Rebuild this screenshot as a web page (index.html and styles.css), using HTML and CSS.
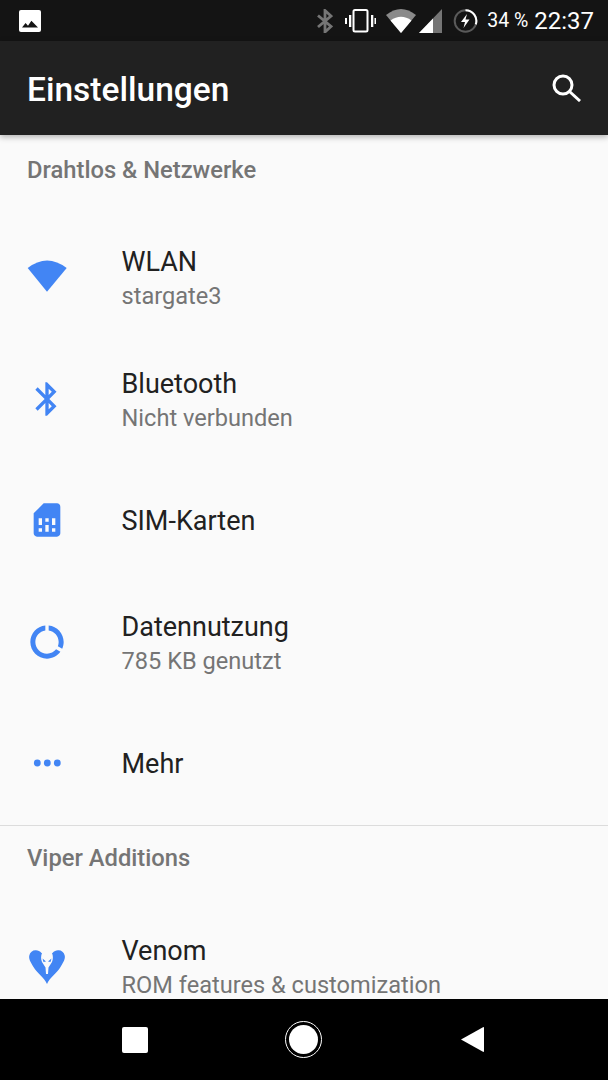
FILE: index.html
```html
<!DOCTYPE html>
<html lang="de">
<head>
<meta charset="UTF-8">
<meta name="viewport" content="width=device-width, initial-scale=1.0">
<title>Einstellungen</title>
<link rel="stylesheet" href="styles.css">
</head>
<body>
<div class="phone">
  <div class="status-bar">
    <svg class="st-image" viewBox="0 0 22 22"><rect width="22" height="22" rx="2" fill="#fff"/><path d="M3 17.500l3.600-4.400 2.400 2.600 3.400-5 6.600 6.800z" fill="#141414"/></svg>
    <div class="status-right">
      <svg class="st-bt" viewBox="0 0 16 24"><path d="M1 6.500l13 11-6 5.500V1.500l6 5.500-13 11" fill="none" stroke="#757575" stroke-width="2.800"/></svg>
      <svg class="st-vib" viewBox="0 0 31 24"><rect x="8.500" y="1" width="14" height="21.500" rx="1.500" fill="none" stroke="#fff" stroke-width="2"/><path d="M4 6h2.300v12H4zM26 6h2.300v12H26zM0 9h2v6H0zM29.500 9h2v6h-2z" fill="#fff"/></svg>
      <svg class="st-wifi" viewBox="0 0 30 24"><path d="M0 6Q15 -6 30 6L15 24z" fill="#8a8a8a"/><path d="M4.500 11.500Q15 4 25.500 11.500L15 24z" fill="#fff"/></svg>
      <svg class="st-signal" viewBox="0 0 23 24"><path d="M0 24L23 0V24z" fill="#757575"/><path d="M0 24L14 9.400V24z" fill="#fff"/></svg>
      <svg class="st-batt" viewBox="0 0 25 24"><circle cx="12.500" cy="12" r="10.800" fill="none" stroke="#5a5a5a" stroke-width="2"/><path d="M12.500 1.200A10.800 10.800 0 0 1 22.800 15.400" fill="none" stroke="#fff" stroke-width="2"/><path d="M14 5l-6 8h4l-1.500 6 6-8.500h-4z" fill="#fff"/></svg>
      <span class="st-pct">34 %</span>
      <span class="st-time">22:37</span>
    </div>
  </div>

  <div class="app-bar">
    <span class="app-title">Einstellungen</span>
    <svg class="search" viewBox="0 0 29 28"><circle cx="11" cy="11" r="9" fill="none" stroke="#fff" stroke-width="3"/><path d="M17.500 17.500L28 27" fill="none" stroke="#fff" stroke-width="3"/></svg>
  </div>

  <div class="list">
    <div class="section-head first">Drahtlos &amp; Netzwerke</div>

    <div class="row">
      <svg class="row-icon" viewBox="0 0 40 40"><path d="M.7 11Q20 -4 39.700 11L20 34.800z" fill="#4285f4"/></svg>
      <div class="row-text"><div class="row-title">WLAN</div><div class="row-sub">stargate3</div></div>
    </div>
    <div class="row">
      <svg class="row-icon" viewBox="0 0 24 24"><path d="M17.710 7.710L12 2h-1v7.590L6.410 5 5 6.410 10.590 12 5 17.590 6.410 19 11 14.410V22h1l5.710-5.710-4.300-4.290 4.300-4.290zM13 5.830l1.880 1.880L13 9.590V5.830zm1.880 10.460L13 18.170v-3.760l1.880 1.880z" fill="#4285f4"/></svg>
      <div class="row-text"><div class="row-title">Bluetooth</div><div class="row-sub">Nicht verbunden</div></div>
    </div>
    <div class="row">
      <svg class="row-icon" viewBox="0 0 24 24"><path d="M19.990 4c0-1.100-.890-2-1.990-2h-8L4 8v12c0 1.100.900 2 2 2h12c1.100 0 2-.900 2-2l-.010-16zM9 19H7v-2h2v2zm8 0h-2v-2h2v2zm-8-4H7v-4h2v4zm4 4h-2v-4h2v4zm0-6h-2v-2h2v2zm4 2h-2v-4h2v4z" fill="#4285f4"/></svg>
      <div class="row-text"><div class="row-title">SIM-Karten</div></div>
    </div>
    <div class="row">
      <svg class="row-icon" viewBox="0 0 24 24"><path d="M13 2.050v3.030c3.390.490 6 3.390 6 6.920 0 .900-.180 1.750-.480 2.540l2.600 1.530c.560-1.240.880-2.620.880-4.070 0-5.180-3.950-9.450-9-9.950zM12 19c-3.870 0-7-3.130-7-7 0-3.530 2.610-6.430 6-6.920V2.050c-5.060.500-9 4.760-9 9.950 0 5.520 4.470 10 9.990 10 3.310 0 6.240-1.610 8.060-4.090l-2.600-1.530C16.170 17.980 14.210 19 12 19z" fill="#4285f4"/></svg>
      <div class="row-text"><div class="row-title">Datennutzung</div><div class="row-sub">785 KB genutzt</div></div>
    </div>
    <div class="row">
      <svg class="row-icon" viewBox="0 0 40 40"><circle cx="10.300" cy="20" r="3.400" fill="#4285f4"/><circle cx="20.300" cy="20" r="3.400" fill="#4285f4"/><circle cx="30.300" cy="20" r="3.400" fill="#4285f4"/></svg>
      <div class="row-text"><div class="row-title">Mehr</div></div>
    </div>

    <div class="section-head">Viper Additions</div>

    <div class="row">
      <svg class="row-icon" viewBox="0 0 40 40">
        <path d="M20 38C17 31 10 27 6.500 21 3.500 16 1.500 13 2.300 9.500 3 6 6 4 9 4.300 11 4.500 13 5 14.500 7H25.500C27 5 29 4.500 31 4.300 34 4 37 6 37.700 9.500 38.500 13 36.500 16 33.500 21 30 27 23 31 20 38z" fill="#4285f4"/>
        <path d="M15 7C13.800 10 13.800 13 15 16L18.500 21.500 19 28h2L21.500 21.500 25 16C26.200 13 26.200 10 25 7 23 5.500 17 5.500 15 7z" fill="#fafafa"/>
        <path d="M15.500 12.500l3.500 3-2.500.5zM24.500 12.500l-3.500 3 2.500.5z" fill="#4285f4"/>
      </svg>
      <div class="row-text"><div class="row-title">Venom</div><div class="row-sub">ROM features &amp; customization</div></div>
    </div>
  </div>

  <div class="nav-bar">
    <div class="nav-square"></div>
    <div class="nav-home"><div class="nav-home-dot"></div></div>
    <svg class="nav-back" viewBox="0 0 25 27"><path d="M1 13.500L23 1.200c.6-.3 1 0 1 .6v23.400c0 .6-.4.9-1 .6z" fill="#fff"/></svg>
  </div>
</div>
</body>
</html>
```

FILE: styles.css
```css
body {
  margin: 0;
  font-family: Roboto, "Noto Sans", sans-serif;
  background: #000;
}

.phone {
  width: 608px;
  height: 1080px;
  display: flex;
  flex-direction: column;
  overflow: hidden;
  background: #fafafa;
}

/* status bar */
.status-bar {
  height: 41px;
  flex: none;
  background: #141414;
  display: flex;
  align-items: center;
  justify-content: space-between;
  padding: 0 14px 0 19px;
  color: #fff;
}

.status-right {
  display: flex;
  align-items: center;
}

.st-image { width: 22px; height: 22px; }
.st-bt { width: 16px; height: 24px; }
.st-vib { width: 31px; height: 24px; margin-left: 12px; }
.st-wifi { width: 30px; height: 24px; margin-left: 10px; }
.st-signal { width: 23px; height: 24px; margin-left: 3px; }
.st-batt { width: 25px; height: 24px; margin-left: 11px; }

.st-pct {
  font-size: 19.500px;
  margin-left: 9px;
}

.st-time {
  font-size: 24px;
  margin-left: 6px;
}

/* app bar */
.app-bar {
  height: 94px;
  flex: none;
  background: #212121;
  display: flex;
  align-items: center;
  justify-content: space-between;
  padding: 0 27px;
  box-shadow: 0 2px 6px rgba(0, 0, 0, 0.3);
  position: relative;
}

.app-title {
  color: #fff;
  font-size: 33.500px;
  font-weight: 500;
  margin-top: 2px;
}

.search { width: 29px; height: 28px; }

/* settings list */
.list {
  flex: 1;
  overflow: hidden;
}

.section-head {
  height: 82px;
  box-sizing: border-box;
  margin-top: -1px;
  padding: 18px 27px 0;
  border-top: 1px solid #dcdcdc;
  font-size: 23.750px;
  font-weight: 500;
  color: #757575;
}

.section-head.first {
  height: 83.600px;
  margin-top: 0;
  border-top: none;
  padding-top: 21px;
}

.row {
  height: 121.500px;
  display: flex;
  align-items: center;
  padding-left: 27px;
}

.row-icon {
  width: 40px;
  height: 40px;
  flex: none;
  margin-bottom: 4px;
}

.row-text {
  margin-left: 54.500px;
}

.row-title {
  font-size: 27px;
  color: #212121;
  line-height: 34px;
}

.row-title:only-child {
  margin-bottom: 2px;
}

.row-sub {
  font-size: 23.600px;
  color: #757575;
  line-height: 34px;
}

/* nav bar */
.nav-bar {
  height: 81px;
  flex: none;
  background: #000;
  display: flex;
  align-items: center;
  padding-left: 122px;
}

.nav-square {
  width: 26px;
  height: 26px;
  border-radius: 2px;
  background: #fff;
}

.nav-home {
  width: 37px;
  height: 37px;
  box-sizing: border-box;
  border: 1px solid #fff;
  border-radius: 50%;
  margin-left: 137px;
  display: flex;
  align-items: center;
  justify-content: center;
}

.nav-home-dot {
  width: 29px;
  height: 29px;
  border-radius: 50%;
  background: #fff;
}

.nav-back {
  width: 25px;
  height: 27px;
  margin-left: 138px;
}
```
